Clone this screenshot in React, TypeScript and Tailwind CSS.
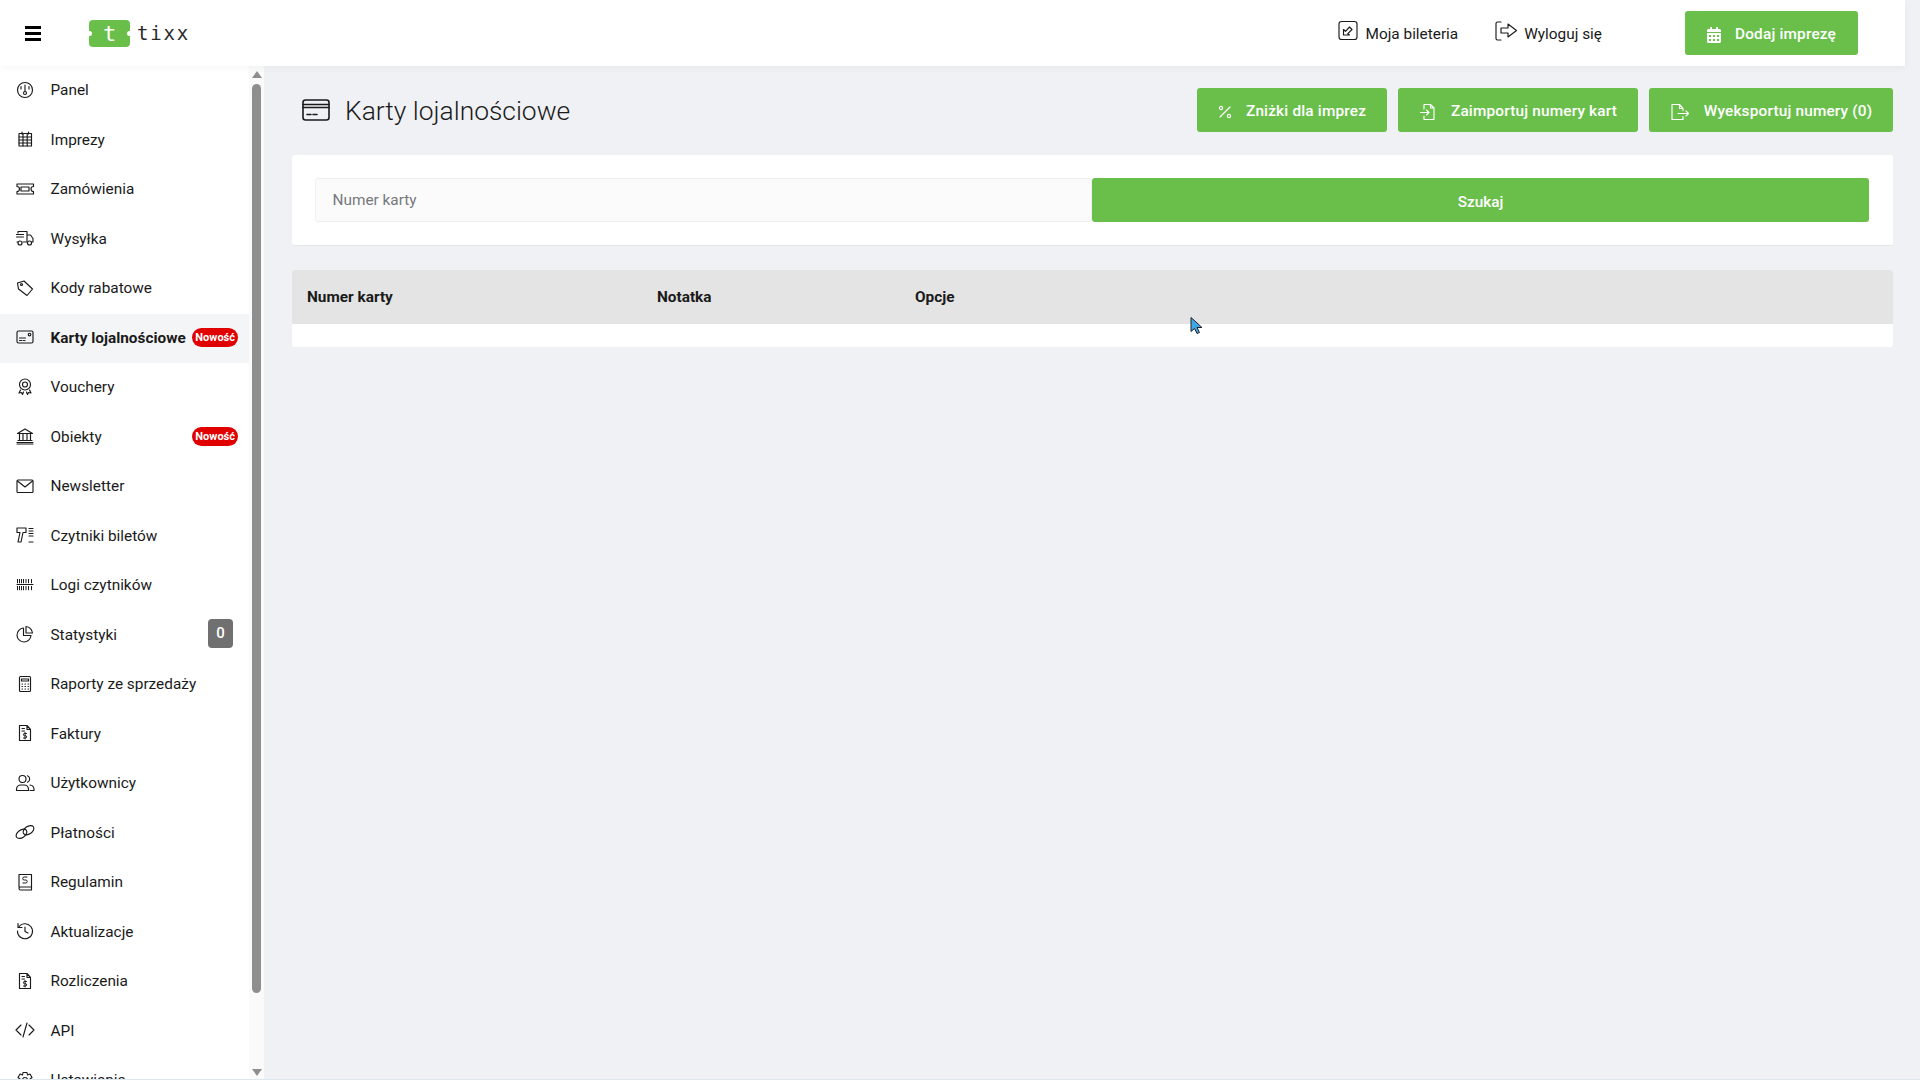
import { ReactNode } from "react";
import { FaCalendarAlt } from "react-icons/fa";

const s = { fill: "none", stroke: "currentColor", strokeWidth: 1.15, strokeLinecap: "round", strokeLinejoin: "round" } as const;

function Ico({ children }: { children: ReactNode }) {
  return (
    <svg viewBox="0 0 20 20" className="mb-[2px] w-5 h-5 shrink-0 text-[#1a1a1a]" {...s}>
      {children}
    </svg>
  );
}

const icons: Record<string, ReactNode> = {
  panel: (
    <>
      <circle cx="10" cy="10" r="7.5" />
      <path d="M10 5v6M6 6.5v2.5M14 6.5v2.5" />
      <circle cx="10" cy="13" r="1.5" />
    </>
  ),
  imprezy: (
    <>
      <rect x="4" y="4.5" width="12.5" height="12.5" />
      <path d="M4 8h12.5M4 11h12.5M4 14h12.5M8 4.5V17M12.2 4.5V17M7 3v2M13.5 3v2" />
    </>
  ),
  zamowienia: (
    <>
      <path d="M2 5h16.5v2.5a2.5 2.5 0 0 0 0 5V15H2v-2.5a2.5 2.5 0 0 0 0-5z" />
      <rect x="6" y="8" width="8" height="4" />
    </>
  ),
  wysylka: (
    <>
      <path d="M3 5V3.5h9V14H8M12 7h3.5l2.5 3.5V14h-1.5M3 14H2" />
      <circle cx="5" cy="15" r="2" />
      <circle cx="14.5" cy="15" r="2" />
      <path d="M1.5 6.5h7M1.5 9h7" />
    </>
  ),
  kody: (
    <>
      <path d="M2.5 5 9 3l8.5 8-5.5 6.5L3.5 11z" />
      <circle cx="6.5" cy="6.5" r="1" />
    </>
  ),
  karty: (
    <>
      <rect x="2" y="4" width="16" height="12" rx="1.5" />
      <path d="M4.5 11h6M4.5 13.5h2.5M8.5 13.5h1.5" />
      <circle cx="14.5" cy="7.5" r="1.3" />
    </>
  ),
  vouchery: (
    <>
      <circle cx="10" cy="7.5" r="5.5" />
      <circle cx="10" cy="7.5" r="2.5" />
      <path d="M5.5 13l-1.5 3 2.5-.5 1 2 1-2.5M14.5 13l1.5 3-2.5-.5-1 2-1-2.5" />
    </>
  ),
  obiekty: <path d="M2.5 7.5 10 3l7.5 4.5zM4.5 8v6M8 8v6M12 8v6M15.5 8v6M3 14.5h14M2 16.5h16M2 18h16" />,
  newsletter: (
    <>
      <rect x="2" y="4" width="16" height="12.5" rx="1" />
      <path d="M2.5 5 10 11l7.5-6" />
    </>
  ),
  czytniki: <path d="M2 3h9v4.5H8l-2 9.5H3l2-9.5H2zM14 3.5h4M14 6h4M14 8.5h4M14 11h4M14 17h4" />,
  logi: (
    <>
      <path d="M2 9.5h16" />
      <path d="M2.5 4v4.2M4.5 4v4.2M6.5 4v4.2M8.5 4v4.2M11 4v4.2M13.5 4v4.2M16.5 4v4.2M2.5 11v4.2M4.5 11v4.2M6.5 11v4.2M8.5 11v4.2M11 11v4.2M13.5 11v4.2M16.5 11v4.2" strokeWidth="1" strokeLinecap="butt" />
    </>
  ),
  statystyki: (
    <>
      <path d="M8.5 4a7 7 0 1 0 7.5 7.5H8.5z" />
      <path d="M11 2.5a7 7 0 0 1 6.5 6.5H11z" />
    </>
  ),
  raporty: (
    <>
      <rect x="4.5" y="2.5" width="11" height="15" rx="1" />
      <path d="M6.5 5h7v2h-7zM7 10h.5M10 10h.5M13 10h.5M7 12.5h.5M10 12.5h.5M13 12.5h.5M7 15h.5M10 15h.5M13 15h.5" />
    </>
  ),
  faktury: (
    <>
      <path d="M4.5 2.5H12l3.5 4v11h-11zM12 2.5v4h3.5M7 5.5h2.5M7 8h2.5" />
      <path d="M11.5 10.5H9.5a1 1 0 0 0 0 2.2h1a1 1 0 0 1 0 2.3H8.5M10 9.5v6.5" strokeWidth="1" />
    </>
  ),
  uzytkownicy: (
    <>
      <circle cx="7.5" cy="6" r="3.5" />
      <path d="M1.5 17.5v-1.5a4.5 4.5 0 0 1 4.5-4h3a4.5 4.5 0 0 1 4.5 4v1.5z" />
      <path d="M12.5 2.8a3.5 3.5 0 0 1 0 6.5M15 12a4.5 4.5 0 0 1 4 4v1.5h-4" />
    </>
  ),
  platnosci: (
    <>
      <ellipse cx="6.5" cy="11.8" rx="6" ry="3.8" transform="rotate(-35 6.5 11.8)" />
      <ellipse cx="13.5" cy="8.2" rx="6" ry="3.8" transform="rotate(-35 13.5 8.2)" />
    </>
  ),
  regulamin: (
    <>
      <path d="M4 15V2.5h12.5V15H5.5a1.5 1.5 0 0 0 0 3h11v-3" />
      <path d="M12 5H9.2a1.2 1.2 0 0 0 0 3h1.5a1.2 1.2 0 0 1 0 3H8" strokeWidth="1" />
    </>
  ),
  aktualizacje: (
    <>
      <path d="M3.5 6.5A7.5 7.5 0 1 1 2.5 10" />
      <path d="M3 2.5v4h4M10 6v4.5l3 1.5" />
    </>
  ),
  api: <path d="M6 5 1 10l5 5M14 5l5 5-5 5M12 3 8 17" />,
  ustawienia: (
    <>
      <circle cx="10" cy="10" r="2.5" />
      <path d="M8 2.5h4l.5 2.5 2.5-1 2 3.5-2 1.5v2l2 1.5-2 3.5-2.5-1-.5 2.5H8L7.5 15 5 16l-2-3.5L5 11V9L3 7.5 5 4l2.5 1z" />
    </>
  ),
};

const items: { label: string; icon: string; badge?: "new" | "zero"; active?: boolean }[] = [
  { label: "Panel", icon: "panel" },
  { label: "Imprezy", icon: "imprezy" },
  { label: "Zamówienia", icon: "zamowienia" },
  { label: "Wysyłka", icon: "wysylka" },
  { label: "Kody rabatowe", icon: "kody" },
  { label: "Karty lojalnościowe", icon: "karty", badge: "new", active: true },
  { label: "Vouchery", icon: "vouchery" },
  { label: "Obiekty", icon: "obiekty", badge: "new" },
  { label: "Newsletter", icon: "newsletter" },
  { label: "Czytniki biletów", icon: "czytniki" },
  { label: "Logi czytników", icon: "logi" },
  { label: "Statystyki", icon: "statystyki", badge: "zero" },
  { label: "Raporty ze sprzedaży", icon: "raporty" },
  { label: "Faktury", icon: "faktury" },
  { label: "Użytkownicy", icon: "uzytkownicy" },
  { label: "Płatności", icon: "platnosci" },
  { label: "Regulamin", icon: "regulamin" },
  { label: "Aktualizacje", icon: "aktualizacje" },
  { label: "Rozliczenia", icon: "faktury" },
  { label: "API", icon: "api" },
  { label: "Ustawienia", icon: "ustawienia" },
];

function GreenButton({ icon, label, className }: { icon: ReactNode; label: string; className: string }) {
  return (
    <button className={`flex items-center justify-center gap-[14px] rounded-[3px] bg-[#6abf4b] pt-[3px] text-[15.36px] font-medium tracking-[0.18px] text-white ${className}`}>
      {icon}
      {label}
    </button>
  );
}

export default function App() {
  return (
    <div className="relative flex h-screen w-full flex-col overflow-hidden bg-[#f0f1f5] font-['Roboto',sans-serif] text-[#1a1a1a]">
      <header className="z-10 flex h-[66px] w-[1905px] shrink-0 items-center bg-white pr-[47px] shadow-[0_2px_8px_rgba(0,0,0,0.04)]">
        <div className="ml-[25px] flex w-[16px] flex-col gap-[3px]">
          <span className="h-[3px] bg-black" />
          <span className="h-[3px] bg-black" />
          <span className="h-[3px] bg-black" />
        </div>
        <div className="ml-[48px] flex items-center">
          <span className="relative flex h-[27px] w-[41px] items-center justify-center overflow-hidden rounded-[4px] bg-[#6abf4b] font-['DejaVu_Sans_Mono',monospace] text-[22px] text-white">
            t
            <span className="absolute top-[11px] -left-[2px] h-[5px] w-[5px] rounded-full bg-white" />
            <span className="absolute top-[11px] -right-[2px] h-[5px] w-[5px] rounded-full bg-white" />
          </span>
          <span className="ml-[7px] font-['DejaVu_Sans_Mono',monospace] text-[19px] tracking-[1.8px] text-[#2a2a2a]">tixx</span>
        </div>
        <div className="ml-auto flex items-center gap-[6px] text-[15.36px]">
          <svg viewBox="0 0 20 20" className="mb-[5px] h-[21px] w-[20px]" {...s}>
            <rect x="1" y="1" width="18" height="18" rx="2.5" />
            <path d="M5.5 14.5V9l2 1.8L11.5 6.5 14 9l-4.2 4.2 1.7 1.3z" />
          </svg>
          <span className="ml-[2px] pt-[3px]">Moja bileteria</span>
        </div>
        <div className="ml-[36px] flex items-center gap-[6px] text-[15.36px]">
          <svg viewBox="0 0 24 20" className="mb-[5px] h-[20px] w-[24px]" {...s}>
            <path d="M7 1H3.5A1.5 1.5 0 0 0 2 2.5v15A1.5 1.5 0 0 0 3.5 19H7" />
            <path d="M7 7h7V3l8.5 6.5L14 16v-4H7z" />
          </svg>
          <span className="pt-[3px]">Wyloguj się</span>
        </div>
        <GreenButton
          className="ml-[83px] h-[44px] w-[173px]"
          label="Dodaj imprezę"
          icon={<FaCalendarAlt className="h-[16px] w-[14px]" />}
        />
      </header>

      <div className="flex min-h-0 flex-1">
        <aside className="flex w-[264px] shrink-0 bg-white">
          <nav className="min-w-0 flex-1 overflow-hidden">
            {items.map((item) => (
              <div
                key={item.label}
                className={`flex h-[49.5px] shrink-0 items-center pl-[15px] pr-[11px] text-[15.36px] ${item.active ? "bg-[#f4f5f7] font-bold" : ""}`}
              >
                <Ico>{icons[item.icon]}</Ico>
                <span className="ml-[15.5px] whitespace-nowrap">{item.label}</span>
                {item.badge === "new" && (
                  <span className="mb-[2px] ml-auto rounded-full bg-[#e00000] px-[3px] py-[2px] text-[11px] leading-[15px] font-bold text-white">Nowość</span>
                )}
                {item.badge === "zero" && (
                  <span className="mr-[5px] mb-[4px] ml-auto flex h-[29px] w-[25px] items-center justify-center rounded-[4px] bg-[#707070] text-[15px] font-medium text-white">0</span>
                )}
              </div>
            ))}
          </nav>
          <div className="flex w-[15px] flex-col items-center bg-[#fafafa]">
            <span className="mt-[5px] h-0 w-0 border-x-[5px] border-b-[7px] border-x-transparent border-b-[#8e8e8e]" />
            <span className="mt-[6px] h-[909px] w-[9px] rounded-full bg-[#8e8e8e]" />
            <span className="mt-auto mb-[3px] h-0 w-0 border-x-[5px] border-t-[7px] border-x-transparent border-t-[#8e8e8e]" />
          </div>
        </aside>

        <main className="min-w-0 flex-1 pt-[22px] pr-[27px] pl-[28px]">
          <div className="flex h-[44px] items-center">
            <svg viewBox="0 0 28 22" className="ml-[10px] h-[22px] w-[28px]" {...s} strokeWidth="1.6">
              <rect x="1" y="1" width="26" height="20" rx="2.5" />
              <path d="M1 5.5h26M1 8.5h26M5 15.5h4M11 15.5h4" />
            </svg>
            <h1 className="ml-[15px] mt-[3px] text-[26.4px] font-light">Karty lojalnościowe</h1>
            <div className="ml-auto flex gap-[11px]">
              <GreenButton
                className="h-[44px] w-[190px]"
                label="Zniżki dla imprez"
                icon={
                  <svg viewBox="0 0 14 14" className="h-[14px] w-[14px]" {...s}>
                    <path d="M12 2 2 12" />
                    <circle cx="3" cy="3" r="1.6" />
                    <circle cx="11" cy="11" r="1.6" />
                  </svg>
                }
              />
              <GreenButton
                className="h-[44px] w-[240px]"
                label="Zaimportuj numery kart"
                icon={
                  <svg viewBox="0 0 18 18" className="h-[18px] w-[18px]" {...s}>
                    <path d="M5 6V1.5h6.5L15 5v11.5H5V13M11.5 1.5V5H15M1.5 9.5H10M7.5 7l2.5 2.5L7.5 12" />
                  </svg>
                }
              />
              <GreenButton
                className="h-[44px] w-[244px]"
                label="Wyeksportuj numery (0)"
                icon={
                  <svg viewBox="0 0 20 18" className="h-[18px] w-[20px]" {...s}>
                    <path d="M13 7.5V5.5L9.5 1.5H2v15h11v-3M9.5 1.5v4H13M8 10.5h10.5M16 8l2.5 2.5L16 13" />
                  </svg>
                }
              />
            </div>
          </div>

          <section className="mt-[23px] grid h-[91px] grid-cols-2 items-center rounded-[3px] border-b border-[#e4e5e8] bg-white pr-[24px] pl-[23px]">
            <div className="flex h-[44px] items-center rounded-[3px] border border-[#efefef] bg-[#fbfbfb] pt-[2px] pl-[16.5px] text-[15.36px] text-[#75787d]">Numer karty</div>
            <button className="h-[44px] rounded-[3px] bg-[#6abf4b] pt-[5px] text-[15.36px] font-medium text-white">Szukaj</button>
          </section>

          <section className="mt-[24px] overflow-hidden rounded-[3px] bg-white">
            <div className="grid h-[54px] grid-cols-[350px_258px_1fr] items-center bg-[#e4e4e4] pt-[2px] pl-[15px] text-[15.36px] font-bold">
              <span>Numer karty</span>
              <span>Notatka</span>
              <span>Opcje</span>
            </div>
            <div className="h-[23px]" />
          </section>
        </main>
      </div>
      <div className="h-px shrink-0 bg-[#dbe9ee]" />

      <svg viewBox="0 0 14 18" className="absolute top-[316px] left-[1190px] h-[19px] w-[14px]">
        <path d="M1 1v14l3.5-3 2.5 5 2.5-1-2.5-5H12z" fill="#3fa6e8" stroke="#222" strokeWidth="1" />
      </svg>
    </div>
  );
}
